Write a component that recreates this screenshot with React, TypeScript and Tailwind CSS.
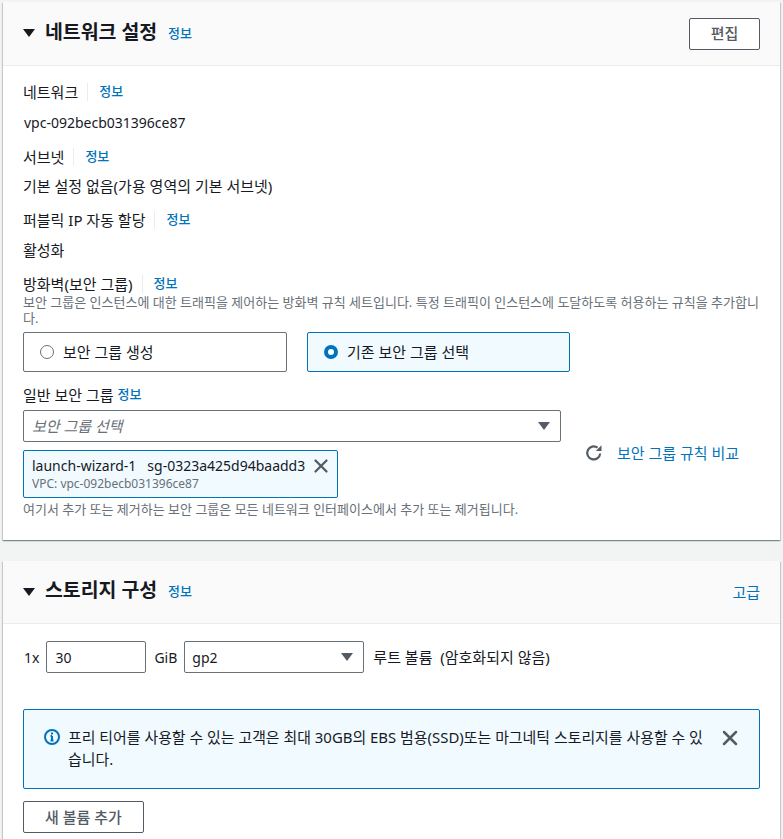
import { X } from 'lucide-react';

function Info({ className = '' }: { className?: string }) {
  return <a className={`text-[13px] font-medium text-[#0073bb] ${className}`}>정보</a>;
}

function Caret({ className = '' }: { className?: string }) {
  return (
    <svg width="12" height="8" viewBox="0 0 12 8" className={className}>
      <path d="M0 0h12L6 8z" fill="currentColor" />
    </svg>
  );
}

function Refresh() {
  return (
    <svg width="18" height="18" viewBox="0 0 18 18" className="text-[#545b64]">
      <path d="M15.2 9.5A6.5 6.5 0 1 1 12.6 3.7" fill="none" stroke="currentColor" strokeWidth="2.2" />
      <path d="M10.8 7h5.7V1.3z" fill="currentColor" />
    </svg>
  );
}

function Label({ text }: { text: string }) {
  return (
    <div className="flex h-5 items-center">
      <span className="pr-[9px]">{text}</span>
      <span className="h-[18px] border-l border-[#eaeded]" />
      <Info className="ml-[11px]" />
    </div>
  );
}

function Header({ title, right }: { title: string; right: React.ReactNode }) {
  return (
    <div className="flex items-center justify-between border-b border-[#eaeded] bg-[#fafafa] pr-5 pl-[20px]">
      <div className="flex items-center">
        <Caret className="text-[#16191f]" />
        <h2 className="ml-[10px] pb-[4px] text-[19.4px] font-bold text-[#16191f]">{title}</h2>
        <Info className="ml-[11px]" />
      </div>
      {right}
    </div>
  );
}

export default function App() {
  return (
    <div className="h-[839px] overflow-hidden bg-[#f2f3f3] px-[3px] pt-[2px] font-['Noto_Sans','Noto_Sans_CJK_KR',sans-serif] text-[15px] text-[#16191f]">
      {/* 네트워크 설정 */}
      <section className="h-[538px] bg-white shadow-[0_1px_1px_0_rgba(0,28,36,0.3),1px_1px_1px_0_rgba(0,28,36,0.15),-1px_1px_1px_0_rgba(0,28,36,0.15)]">
        <div className="[&>div]:h-[64px]">
          <Header
            title="네트워크 설정"
            right={
              <button className="h-[32px] w-[71px] rounded-[2px] border border-[#545b64] bg-white font-medium text-[#545b64]">
                편집
              </button>
            }
          />
        </div>
        <div className="px-5 pt-[16px]">
          <Label text="네트워크" />
          <div className="mt-[11px] h-5 pl-px text-[14px] leading-5">vpc-092becb031396ce87</div>
          <div className="mt-[14px]"><Label text="서브넷" /></div>
          <div className="mt-[9px] h-5 leading-5">기본 설정 없음(가용 영역의 기본 서브넷)</div>
          <div className="mt-[14px]"><Label text="퍼블릭 IP 자동 할당" /></div>
          <div className="mt-[10px] h-5 leading-5">활성화</div>
          <div className="mt-[14px]"><Label text="방화벽(보안 그룹)" /></div>
          <p className="text-[13px] leading-[16px] text-[#687078]">
            보안 그룹은 인스턴스에 대한 트래픽을 제어하는 방화벽 규칙 세트입니다. 특정 트래픽이 인스턴스에 도달하도록 허용하는 규칙을 추가합니다.
          </p>
          <div className="mt-[6px] flex gap-5">
            <label className="flex h-[40px] w-[264px] items-center rounded-[2px] border border-[#687078] pl-4">
              <span className="h-[14px] w-[14px] rounded-full border-[1.5px] border-[#687078]" />
              <span className="ml-[9px]">보안 그룹 생성</span>
            </label>
            <label className="flex h-[40px] w-[263px] items-center rounded-[2px] border border-[#0073bb] bg-[#f1faff] pl-4">
              <span className="h-[14px] w-[14px] rounded-full border-[4px] border-[#0073bb] bg-white" />
              <span className="ml-[9px]">기존 보안 그룹 선택</span>
            </label>
          </div>
          <div className="mt-[13px] flex h-5 items-center">
            일반 보안 그룹
            <Info className="ml-[4px]" />
          </div>
          <div className="mt-[5px] flex">
            <div>
              <div className="flex h-[32px] w-[538px] items-center justify-between rounded-[2px] border border-[#687078] pr-[10px] pl-[8px]">
                <span className="italic text-[#687078]">보안 그룹 선택</span>
                <Caret className="text-[#545b64]" />
              </div>
              <div className="mt-[8px] h-[48px] w-[315px] rounded-[2px] border border-[#0073bb] bg-[#f1faff] pt-[5px] pl-[8px]">
                <div className="flex h-5 items-center text-[14px] leading-5">
                  <span>launch-wizard-1</span>
                  <span className="ml-[11px]">sg-0323a425d94baadd3</span>
                  <X size={22} strokeWidth={2.5} className="ml-[5px] text-[#545b64]" />
                </div>
                <div className="text-[12px] leading-[16px] text-[#687078]">VPC: vpc-092becb031396ce87</div>
              </div>
            </div>
            <div className="mt-[33px] ml-[24px] flex h-5 items-center">
              <Refresh />
              <a className="ml-[14px] text-[#0073bb]">보안 그룹 규칙 비교</a>
            </div>
          </div>
          <p className="mt-[3px] text-[13px] leading-[16px] text-[#687078]">
            여기서 추가 또는 제거하는 보안 그룹은 모든 네트워크 인터페이스에서 추가 또는 제거됩니다.
          </p>
        </div>
      </section>

      {/* 스토리지 구성 */}
      <section className="mt-[21px] h-[300px] bg-white shadow-[0_1px_1px_0_rgba(0,28,36,0.3),1px_1px_1px_0_rgba(0,28,36,0.15),-1px_1px_1px_0_rgba(0,28,36,0.15)]">
        <div className="[&>div]:h-[63px]">
          <Header title="스토리지 구성" right={<a className="text-[#0073bb]">고급</a>} />
        </div>
        <div className="px-5 pt-[17px]">
          <div className="flex h-[32px] items-center text-[14px]">
            <span className="pl-px">1x</span>
            <div className="ml-[7px] flex h-[32px] w-[100px] items-center rounded-[2px] border border-[#687078] pl-[8px]">30</div>
            <span className="ml-[8px]">GiB</span>
            <div className="ml-[7px] flex h-[32px] w-[180px] items-center justify-between rounded-[2px] border border-[#687078] pr-[10px] pl-[7px]">
              <span>gp2</span>
              <Caret className="text-[#545b64]" />
            </div>
            <span className="ml-[9px] whitespace-pre text-[15px]">루트 볼륨  (암호화되지 않음)</span>
          </div>
          <div className="mt-[36px] flex h-[80px] rounded-[2px] border border-[#0073bb] bg-[#f1faff] pt-[16px] pr-[16px] pl-[20px]">
            <svg width="16" height="16" viewBox="0 0 16 16" className="mt-[3px] shrink-0 text-[#0073bb]">
              <circle cx="8" cy="8" r="7" fill="none" stroke="currentColor" strokeWidth="2" />
              <path d="M8 7v4.5M6.5 11.5h3M6.5 7H8" fill="none" stroke="currentColor" strokeWidth="2" />
              <path d="M7 3.5h2v2H7z" fill="currentColor" />
            </svg>
            <p className="ml-[8px] w-[640px] text-[14.93px] leading-[22px]">
              프리 티어를 사용할 수 있는 고객은 최대 30GB의 EBS 범용(SSD)또는 마그네틱 스토리지를 사용할 수 있습니다.
            </p>
            <X size={24} strokeWidth={2.5} className="ml-[10px] shrink-0 text-[#545b64]" />
          </div>
          <button className="mt-[12px] h-[32px] w-[121px] rounded-[2px] border border-[#545b64] bg-white font-medium text-[#545b64]">
            새 볼륨 추가
          </button>
        </div>
      </section>
    </div>
  );
}
